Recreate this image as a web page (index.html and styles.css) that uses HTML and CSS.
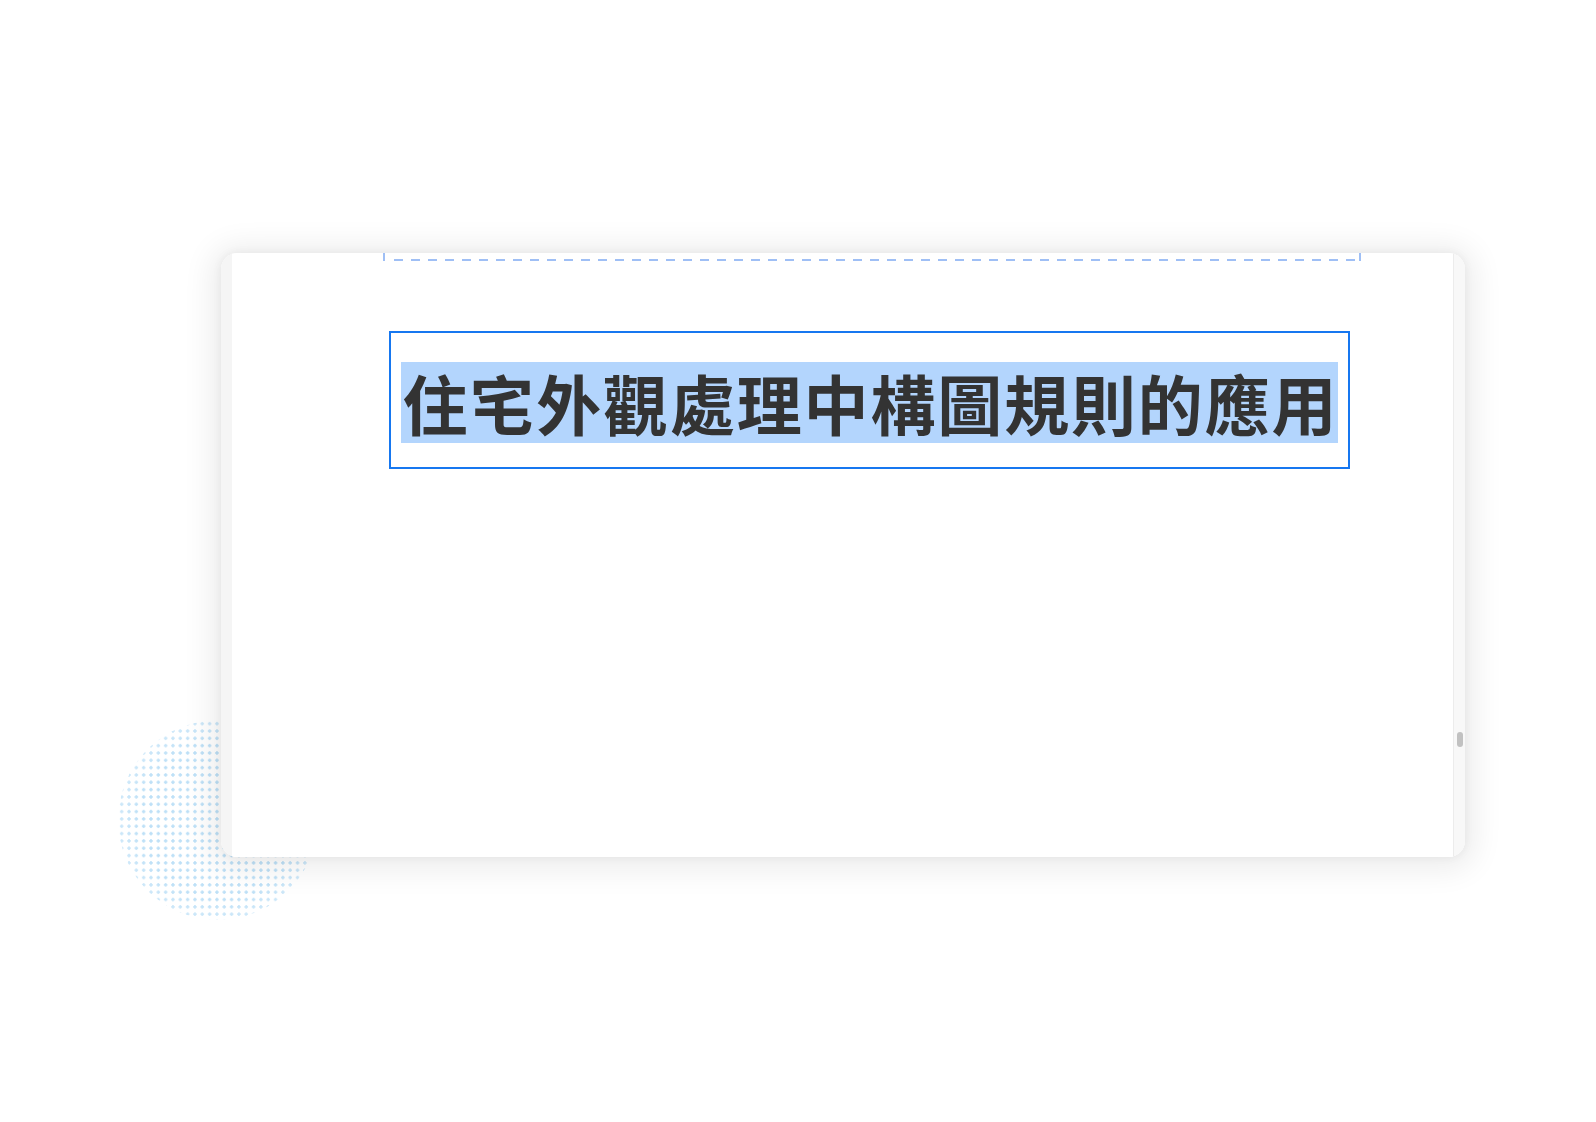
FILE: index.html
```html
<!DOCTYPE html>
<html lang="zh-Hant">
<head>
<meta charset="utf-8">
<title>住宅外觀處理中構圖規則的應用</title>
<link rel="stylesheet" href="styles.css">
</head>
<body>
<div class="stage">
  <div class="dots"></div>
  <div class="card">
    <div class="gutter"></div>
    <div class="main">
      <div class="dashed"></div>
      <div class="title-box">
        <h1 class="title"><span class="sel">住宅外觀處理中構圖規則的應用</span></h1>
      </div>
    </div>
    <div class="track"><div class="thumb"></div></div>
  </div>
</div>
</body>
</html>
```

FILE: styles.css
```css
html, body {
  margin: 0;
  padding: 0;
  background: #ffffff;
}
body {
  width: 1596px;
  height: 1122px;
  overflow: hidden;
  font-family: "Noto Sans CJK TC", "Noto Sans CJK SC", sans-serif;
}
.stage {
  position: relative;
  padding: 253px 0 0 221px;
}
.dots {
  position: absolute;
  left: 118px;
  top: 720px;
  width: 200px;
  height: 200px;
  border-radius: 50%;
  background-image: radial-gradient(circle, #bde0f7 1.4px, transparent 1.7px);
  background-size: 7.33px 7.33px;
  -webkit-mask-image: radial-gradient(circle, #000 55%, rgba(0,0,0,0.3) 100%);
  mask-image: radial-gradient(circle, #000 55%, rgba(0,0,0,0.3) 100%);
}
.card {
  position: relative;
  width: 1244px;
  height: 604px;
  border-radius: 16px;
  background: #ffffff;
  box-shadow: 0 3px 30px 10px rgba(0, 0, 0, 0.075), 0 0 10px rgba(0, 0, 0, 0.06);
  display: flex;
  overflow: hidden;
}
.gutter {
  width: 11px;
  background: #f5f5f5;
  flex: none;
}
.main {
  flex: 1;
  background: #ffffff;
  padding-left: 151px;
}
.dashed {
  width: 974px;
  height: 8px;
  border-left: 2px solid #9fbff5;
  border-right: 2px solid #9fbff5;
  background-image: repeating-linear-gradient(to right, #9fbff5 0 9px, transparent 9px 17px);
  background-size: 100% 2px;
  background-position: 9px 100%;
  background-repeat: no-repeat;
}
.title-box {
  margin-top: 70px;
  margin-left: 6px;
  display: inline-block;
  border: 2px solid #1677f0;
  padding: 29px 10px 24px 10px;
}
.title {
  margin: 0;
  font-size: 65px;
  font-weight: 700;
  letter-spacing: 1.85px;
  line-height: 81px;
  color: #333333;
  white-space: nowrap;
}
.sel {
  display: inline-block;
  background: #b3d5fd;
  line-height: 81px;
  padding-left: 1.5px;
  vertical-align: top;
}
.track {
  width: 12px;
  flex: none;
  background: #f8f8f8;
  border-left: 1px solid #ececec;
  box-sizing: border-box;
}
.thumb {
  margin: 479px auto 0;
  width: 6px;
  height: 15px;
  border-radius: 3px;
  background: #c1c1c1;
}
```
